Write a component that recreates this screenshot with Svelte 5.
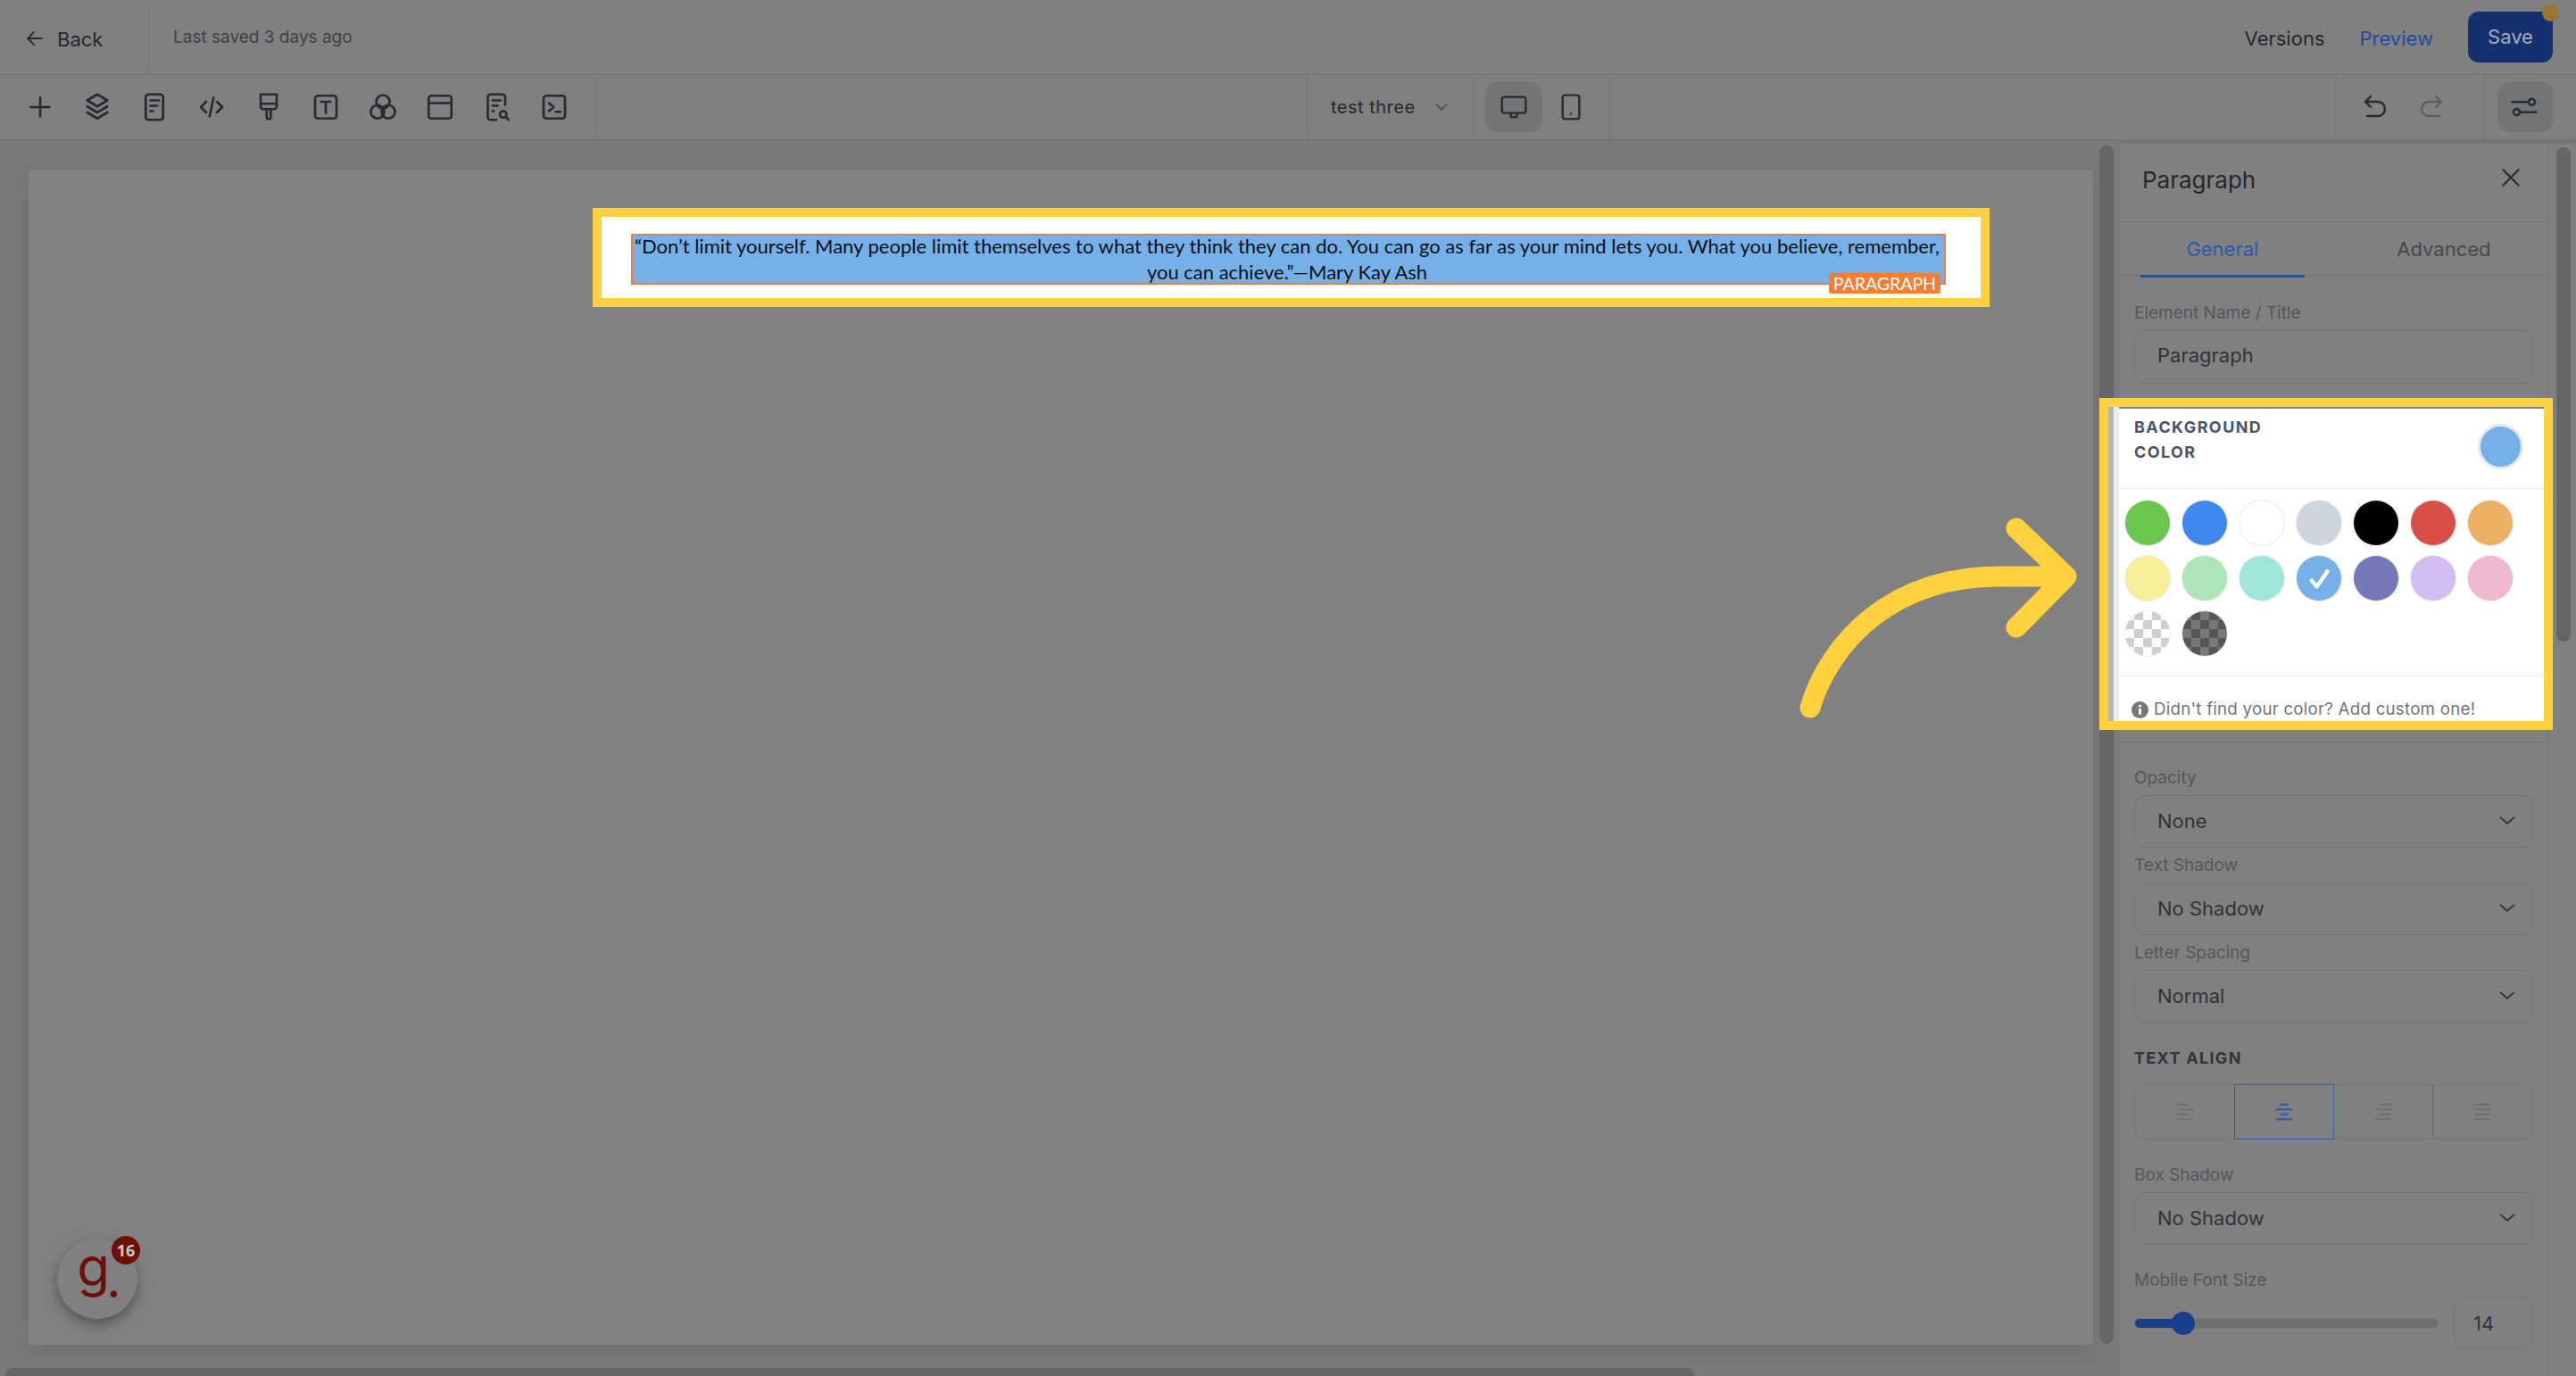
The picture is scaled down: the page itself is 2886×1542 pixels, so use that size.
<script>
  const tools = [
    "M12 5v14M5 12h14",
    "M12 2.500l7.500 4.500-7.500 4.500L4.500 7zM4.500 11.500L12 16l7.500-4.500M4.500 16L12 20.500 19.500 16",
    "M7.500 2.500h9a2 2 0 0 1 2 2v15a2 2 0 0 1-2 2h-9a2 2 0 0 1-2-2v-15a2 2 0 0 1 2-2zM9 7h6.500M9 11h5M9 15h2",
    "M8 8l-4 4 4 4M16 8l4 4-4 4M13.500 5l-3 14",
    "M6 2.500h12v9a2 2 0 0 1-2 2H8a2 2 0 0 1-2-2zM6 9.500h12M10.500 13.500v6a1.500 1.500 0 0 0 3 0v-6",
    "M6 3.500h12a2 2 0 0 1 2 2v13a2 2 0 0 1-2 2H6a2 2 0 0 1-2-2v-13a2 2 0 0 1 2-2zM8.500 8h7M12 8v8.500",
    "M17 8a5 5 0 1 1-10 0a5 5 0 1 1 10 0zM13 15.500a5 5 0 1 1-10 0a5 5 0 1 1 10 0zM21 15.500a5 5 0 1 1-10 0a5 5 0 1 1 10 0z",
    "M5.500 3.500h13a2 2 0 0 1 2 2v13a2 2 0 0 1-2 2h-13a2 2 0 0 1-2-2v-13a2 2 0 0 1 2-2zM3.500 9h17",
    "M18 10.500V4.500a2 2 0 0 0-2-2H7a2 2 0 0 0-2 2v15a2 2 0 0 0 2 2h4.500M8.500 7h6M8.500 11h4M8.500 15h1M19 17.500a2.500 2.500 0 1 1-5 0a2.500 2.500 0 1 1 5 0zM18.500 19.500l2 2",
    "M6 3.500h12a2 2 0 0 1 2 2v13a2 2 0 0 1-2 2H6a2 2 0 0 1-2-2v-13a2 2 0 0 1 2-2zM8 9l3.500 3-3.500 3M13 15.500h3.500"
  ];

  const colors = [
    "#6ac64e", "#3f88ee", "#ffffff", "#cdd5df", "#000000", "#d94f47", "#ebb064",
    "#f8ef9a", "#aee6ba", "#9ee6da", "#75b1e8", "#7679b8", "#d2bdf2", "#f0b8ce"
  ];

  const alignments = [
    ["M2 3h15", "M2 9h20", "M2 15h15", "M2 21h20"],
    ["M7 3h10", "M2 9h20", "M7 15h10", "M2 21h20"],
    ["M8 3h14", "M2 9h20", "M8 15h14", "M2 21h20"],
    ["M2 3h20", "M2 9h20", "M2 15h20", "M2 21h20"]
  ];

  const fontSize = 14;
  const sliderPct = ((fontSize - 8) / 38) * 100;
</script>

{#snippet chevron()}
  <svg class="chev" viewBox="0 0 24 24"><path d="M4 8l8 7 8-7" /></svg>
{/snippet}

{#snippet selectField(label, value)}
  <div class="field">
    <span class="label">{label}</span>
    <div class="control select"><span>{value}</span>{@render chevron()}</div>
  </div>
{/snippet}

<div class="page">
  <header class="topbar">
    <div class="back">
      <svg viewBox="0 0 24 24"><path d="M20 12H5M11 5l-7 7 7 7" /></svg>
      <span>Back</span>
    </div>
    <span class="saved">Last saved 3 days ago</span>
    <div class="actions">
      <span class="versions">Versions</span>
      <span class="preview">Preview</span>
      <button class="save">Save<i class="dot"></i></button>
    </div>
  </header>

  <nav class="toolbar">
    <div class="tools">
      {#each tools as d}
        <svg class="tool" viewBox="0 0 24 24"><path {d} /></svg>
      {/each}
    </div>
    <div class="page-select">
      <span>test three</span>
      <svg class="small-chev" viewBox="0 0 24 24"><path d="M5 8.500l7 7 7-7" /></svg>
    </div>
    <div class="devices">
      <div class="device active">
        <svg viewBox="0 0 24 24"><path d="M4 3.500h16a2 2 0 0 1 2 2v9.500a2 2 0 0 1-2 2H4a2 2 0 0 1-2-2v-9.500a2 2 0 0 1 2-2zM9.500 17v3.500h5V17" /></svg>
      </div>
      <div class="device">
        <svg viewBox="0 0 24 24"><path d="M7 2h10a2 2 0 0 1 2 2v16a2 2 0 0 1-2 2H7a2 2 0 0 1-2-2V4a2 2 0 0 1 2-2zM12 17.500v.1" /></svg>
      </div>
    </div>
    <div class="history">
      <svg viewBox="0 0 24 24"><path d="M9 3L4.500 7.500 9 12M5 7.500h10a5.500 5.500 0 0 1 0 12H6" /></svg>
      <svg class="off" viewBox="0 0 24 24"><path d="M15 3l4.500 4.500L15 12M19 7.500H9a5.500 5.500 0 0 0 0 12h9" /></svg>
    </div>
    <div class="settings">
      <div class="settings-btn">
        <svg viewBox="0 0 24 24"><path d="M2.500 8H15M20.500 8a2.500 2.500 0 1 1-5 0a2.500 2.500 0 1 1 5 0zM21.500 16H9M8.500 16a2.500 2.500 0 1 1-5 0a2.500 2.500 0 1 1 5 0z" /></svg>
      </div>
    </div>
  </nav>

  <div class="workspace">
    <main class="canvas">
      <div class="paper">
        <div class="spot">
          <div class="selected">
            <p>“Don’t limit yourself. Many people limit themselves to what they think they can do. You can go as far as your mind lets you. What you believe, remember, you can achieve.”—Mary Kay Ash</p>
            <span class="tag">PARAGRAPH</span>
          </div>
        </div>
      </div>
      <div class="scroll-x"></div>
      <div class="scroll-y"></div>
    </main>

    <aside class="panel">
      <div class="panel-head">
        <h2>Paragraph</h2>
        <svg viewBox="0 0 24 24"><path d="M4 4l16 16M20 4L4 20" /></svg>
      </div>
      <div class="tabs">
        <span class="tab on">General</span>
        <span class="tab">Advanced</span>
      </div>

      <div class="body">
        <div class="field">
          <span class="label">Element Name / Title</span>
          <div class="control name">Paragraph</div>
        </div>
      </div>

      <section class="color">
        <div class="color-head">
          <h3>BACKGROUND COLOR</h3>
          <span class="current"></span>
        </div>
        <div class="swatches">
          {#each colors as c, i}
            <span class="swatch" style="background:{c}">
              {#if i === 10}
                <svg viewBox="0 0 24 24"><path d="M4 13l6 7L21 4" /></svg>
              {/if}
            </span>
          {/each}
          <span class="swatch check-light"></span>
          <span class="swatch check-dark"></span>
        </div>
        <div class="color-foot">
          <svg viewBox="0 0 20 20">
            <circle cx="10" cy="10" r="10" fill="#777" />
            <rect x="8.500" y="8.500" width="3" height="7" fill="#fff" />
            <circle cx="10" cy="5.500" r="1.700" fill="#fff" />
          </svg>
          <span>Didn't find your color? Add custom one!</span>
        </div>
      </section>

      <div class="body rest">
        {@render selectField("Opacity", "None")}
        {@render selectField("Text Shadow", "No Shadow")}
        {@render selectField("Letter Spacing", "Normal")}

        <h4>TEXT ALIGN</h4>
        <div class="align">
          {#each alignments as lines, i}
            <div class="align-btn" class:on={i === 1}>
              <svg viewBox="0 0 24 24">
                {#each lines as d}<path {d} />{/each}
              </svg>
            </div>
          {/each}
        </div>

        <div class="box-shadow">{@render selectField("Box Shadow", "No Shadow")}</div>

        <div class="field mobile">
          <span class="label">Mobile Font Size</span>
          <div class="slider-row">
            <div class="track">
              <div class="fill" style="width:{sliderPct}%"><i class="thumb"></i></div>
            </div>
            <div class="control number">{fontSize}</div>
          </div>
        </div>
      </div>
    </aside>

    <div class="scroll-panel"></div>
  </div>

  <!-- annotation layer -->
  <div class="frame"><i class="bar"></i><i class="bar light"></i></div>

  <svg class="arrow" viewBox="0 0 400 260">
    <path d="M28 213C50 140 120 63 247 66L315 66M259 12L315 66L259 123" />
  </svg>

  <div class="widget">
    <span class="g">g<span class="period">.</span></span>
    <span class="badge">16</span>
  </div>
</div>

<style>
  :global(body) {
    margin: 0;
    background: #808080;
  }

  .page {
    position: relative;
    width: 2886px;
    height: 1542px;
    overflow: hidden;
    display: flex;
    flex-direction: column;
    background: #808080;
    color: #24272e;
    font-family: Inter, "Liberation Sans", sans-serif;
  }

  svg {
    fill: none;
    stroke: #262b33;
    stroke-width: 1.8;
    stroke-linecap: round;
    stroke-linejoin: round;
    flex: none;
  }

  /* top bar */
  .topbar {
    height: 83px;
    flex: none;
    display: flex;
    align-items: center;
    border-bottom: 1px solid #747678;
    box-sizing: content-box;
  }

  .back {
    width: 167px;
    height: 76px;
    margin-top: 5px;
    box-sizing: border-box;
    display: flex;
    align-items: center;
    gap: 13px;
    padding-left: 27px;
    border-right: 1px solid #747678;
    font-size: 22px;
  }

  .back svg {
    width: 24px;
    height: 24px;
    margin-bottom: 2px;
  }

  .saved {
    margin-left: 27px;
    font-size: 19px;
    color: #3e4148;
  }

  .actions {
    margin-left: auto;
    display: flex;
    align-items: center;
    padding-right: 26px;
  }

  .versions {
    font-size: 22px;
    margin-right: 39px;
    margin-top: 3px;
  }

  .preview {
    font-size: 22px;
    color: #234a9c;
    margin-right: 39px;
    margin-top: 3px;
  }

  .save {
    position: relative;
    width: 95px;
    height: 57px;
    border: 0;
    border-radius: 12px;
    background: #14306f;
    color: #a6adbd;
    font: 22px Inter, sans-serif;
    margin-top: -1px;
  }

  .dot {
    position: absolute;
    top: -8px;
    right: -7px;
    width: 19px;
    height: 19px;
    border-radius: 50%;
    background: #997531;
  }

  /* toolbar */
  .toolbar {
    height: 72px;
    flex: none;
    display: flex;
    align-items: stretch;
    border-bottom: 2px solid #727476;
    box-shadow: 0 2px 4px rgba(0, 0, 0, 0.12);
    position: relative;
  }

  .toolbar > div {
    display: flex;
    align-items: center;
    box-sizing: border-box;
    border-right: 1px solid #747678;
  }

  .tools {
    width: 667px;
    padding-left: 27px;
    gap: 28px;
  }

  .tool {
    width: 36px;
    height: 36px;
  }

  .page-select {
    margin-left: 797px;
    border-left: 1px solid #747678;
    width: 187px;
    padding-left: 26px;
    font-size: 20px;
    letter-spacing: 0.5px;
  }

  .small-chev {
    width: 20px;
    height: 20px;
    margin-left: 19px;
    stroke: #44474d;
  }

  .devices {
    width: 154px;
    padding-left: 13px;
    gap: 0;
  }

  .device {
    width: 64px;
    height: 56px;
    border-radius: 14px;
    display: flex;
    align-items: center;
    justify-content: center;
  }

  .device.active {
    background: #737577;
  }

  .device svg {
    width: 32px;
    height: 32px;
  }

  .history {
    margin-left: 812px;
    border-left: 1px solid #747678;
    width: 167px;
    padding-left: 26px;
    gap: 33px;
  }

  .history svg {
    width: 32px;
    height: 32px;
  }

  .history .off {
    stroke: #5c5f64;
  }

  .settings {
    border-right: 0 !important;
    padding-left: 14px;
  }

  .settings-btn {
    width: 63px;
    height: 56px;
    border-radius: 14px;
    background: #737577;
    display: flex;
    align-items: center;
    justify-content: center;
  }

  .settings-btn svg {
    width: 34px;
    height: 34px;
    margin-left: -3px;
  }

  /* canvas */
  .workspace {
    flex: 1;
    min-height: 0;
    display: flex;
  }

  .canvas {
    position: relative;
    width: 2374px;
    flex: none;
    background: #797a7b;
    padding: 32px 0 0 32px;
    box-sizing: border-box;
    border-right: 1px solid #747678;
  }

  .paper {
    width: 2313px;
    height: 1317px;
    background: #818181;
    padding: 53px 0 0 642px;
    box-sizing: border-box;
    box-shadow: 0 6px 24px rgba(0, 0, 0, 0.1);
  }

  .spot {
    width: 1545px;
    height: 91px;
    box-sizing: border-box;
    background: #fff;
    outline: 10px solid #ffd13f;
    padding: 19px 0 0 33px;
  }

  .selected {
    position: relative;
    width: 1473px;
    height: 57px;
    box-sizing: border-box;
    background: #75b1e8;
    border: 2px solid #f27f37;
    color: #0b0f14;
    font: 22px/29px Lato, sans-serif;
    text-align: center;
  }

  .selected p {
    margin: -3px 0 0;
    padding: 0 3px 0 0;
  }

  .tag {
    position: absolute;
    right: 4px;
    bottom: -12px;
    height: 23px;
    padding: 0 5px;
    border-radius: 3px;
    background: #f27f37;
    color: #fff;
    font: 19.500px/23px Lato, sans-serif;
  }

  .scroll-x {
    position: absolute;
    left: 6px;
    bottom: -6px;
    width: 1892px;
    height: 15px;
    border-radius: 8px;
    background: #666;
  }

  .scroll-y {
    position: absolute;
    left: 2352px;
    top: 5px;
    width: 16px;
    height: 1343px;
    border-radius: 8px;
    background: #666;
  }

  /* side panel */
  .panel {
    width: 481px;
    flex: none;
    box-sizing: border-box;
    border-right: 1px solid #747678;
    overflow: hidden;
  }

  .panel-head {
    height: 90px;
    display: flex;
    align-items: center;
    justify-content: space-between;
    padding: 0 28px 0 26px;
    border-bottom: 1px solid #747678;
  }

  .panel-head h2 {
    margin: -3px 0 0;
    font-size: 26px;
    font-weight: 400;
  }

  .panel-head svg {
    width: 26px;
    height: 26px;
    margin-bottom: 8px;
    stroke-width: 2;
  }

  .tabs {
    height: 59px;
    display: flex;
    padding-left: 24px;
    border-bottom: 1px solid #747678;
  }

  .tab {
    width: 186px;
    text-align: center;
    line-height: 60px;
    font-size: 22px;
    color: #45484e;
  }

  .tab:last-child {
    width: 235px;
    margin-left: 40px;
  }

  .tab.on {
    color: #2d5aa6;
    border-bottom: 3px solid #234f9d;
    height: 59px;
    box-sizing: content-box;
  }

  .body {
    padding: 31px 16px 0 17px;
  }

  .field {
    display: flex;
    flex-direction: column;
    gap: 8px;
  }

  .label {
    font-size: 19px;
    line-height: 22px;
    color: #54575c;
  }

  .control {
    box-sizing: border-box;
    border: 1px solid #737578;
    border-radius: 11px;
    padding: 0 25px 2px;
    display: flex;
    align-items: center;
    font-size: 22px;
    color: #30333a;
  }

  .name {
    height: 60px;
    padding-bottom: 4px;
  }

  .select {
    height: 59px;
    justify-content: space-between;
    padding-right: 17px;
  }

  .chev {
    width: 22px;
    height: 22px;
    stroke: #2e3138;
    stroke-width: 2;
  }

  /* spotlighted colour block: white stops at the frame, the last 22px stay dim */
  .color {
    margin-top: 28px;
    height: 374px;
    border-bottom: 1px solid #747678;
    box-sizing: border-box;
  }

  .color-head {
    height: 90px;
    box-sizing: border-box;
    display: flex;
    justify-content: space-between;
    padding: 7px 27px 0 17px;
    background: #fff;
    border-bottom: 1px solid #e3e6ec;
  }

  .color h3 {
    margin: 0;
    width: 190px;
    font-size: 18px;
    line-height: 28px;
    font-weight: 700;
    letter-spacing: 1.400px;
    color: #475569;
  }

  .current {
    width: 45px;
    height: 45px;
    margin-top: 10px;
    border-radius: 50%;
    background: #75b1e8;
    border: 3px solid #e2e8f0;
  }

  .swatches {
    height: 210px;
    box-sizing: border-box;
    background: #fff;
    border-bottom: 1px solid #e3e6ec;
    display: grid;
    grid-template-columns: repeat(7, 50px);
    grid-auto-rows: 50px;
    column-gap: 14px;
    row-gap: 12px;
    padding: 13px 0 0 7px;
  }

  .swatch {
    border-radius: 50%;
    box-shadow: 0 0 0 1px #e8ebf0;
    display: flex;
    align-items: center;
    justify-content: center;
  }

  .swatch svg {
    width: 28px;
    height: 28px;
    stroke: #fff;
    stroke-width: 3.800;
    stroke-linecap: butt;
  }

  .check-light {
    background: repeating-conic-gradient(#cfcfcf 0 25%, #fff 0 50%) 0 0 / 20px 20px;
  }

  .check-dark {
    background: repeating-conic-gradient(#565656 0 25%, #777 0 50%) 0 0 / 20px 20px;
  }

  .color-foot {
    height: 52px;
    box-sizing: border-box;
    background: #fff;
    display: flex;
    align-items: flex-start;
    gap: 6px;
    padding: 26px 0 0 14px;
    font-size: 18.800px;
    line-height: 22px;
    letter-spacing: 0.2px;
    color: #71757c;
  }

  .color-foot svg {
    width: 19px;
    height: 19px;
    margin-top: 2px;
    stroke: none;
  }

  .rest {
    padding-top: 29px;
    display: flex;
    flex-direction: column;
    gap: 9px;
  }

  .rest h4 {
    margin: 20px 0 0;
    font-size: 18px;
    line-height: 22px;
    letter-spacing: 1.300px;
    font-weight: 700;
    color: #30343b;
  }

  .align {
    height: 62px;
    margin-top: 9px;
    display: grid;
    grid-template-columns: repeat(4, 1fr);
    border: 1px solid #737578;
    border-radius: 11px;
    box-sizing: border-box;
  }

  .align-btn {
    display: flex;
    align-items: center;
    justify-content: center;
  }

  .align-btn:nth-child(3) {
    border-right: 1px solid #66686b;
  }

  .align-btn svg {
    width: 22px;
    height: 22px;
    stroke: #6a6c70;
    stroke-width: 1.900;
    stroke-linecap: butt;
  }

  .align-btn.on {
    border: 1px solid #335f9f;
    margin: -1px 0;
  }

  .align-btn.on svg {
    stroke: #2c5ca8;
    stroke-width: 2.300;
  }

  .box-shadow {
    margin-top: 20px;
  }

  .mobile {
    margin-top: 20px;
  }

  .slider-row {
    display: flex;
    align-items: center;
    gap: 17px;
  }

  .track {
    width: 342px;
    height: 12px;
    border-radius: 6px;
    background: #6f7072;
    border: 1px solid #77797b;
    box-sizing: border-box;
  }

  .fill {
    position: relative;
    height: 10px;
    border-radius: 6px;
    background: #183e8c;
  }

  .thumb {
    position: absolute;
    right: -13px;
    top: -8px;
    width: 26px;
    height: 26px;
    border-radius: 50%;
    background: #183e8c;
  }

  .number {
    width: 89px;
    height: 58px;
    padding: 0 21px;
  }

  .scroll-panel {
    width: 16px;
    height: 554px;
    margin: 7px 0 0 9px;
    border-radius: 8px;
    background: #666;
    flex: none;
  }

  /* annotations */
  .frame {
    position: absolute;
    left: 2352px;
    top: 446px;
    width: 508px;
    height: 372px;
    box-sizing: border-box;
    border: 10px solid #ffd13f;
    display: flex;
  }

  .bar {
    width: 6px;
    background: #b5b5b5;
  }

  .bar.light {
    width: 6px;
    background: #ececec;
  }

  .arrow {
    position: absolute;
    left: 2000px;
    top: 580px;
    width: 400px;
    height: 260px;
    stroke: #ffd13f;
    stroke-width: 23;
  }

  .widget {
    position: absolute;
    left: 64px;
    top: 1388px;
    width: 90px;
    height: 90px;
    border-radius: 50%;
    background: #808080;
    box-shadow: 0 6px 14px rgba(0, 0, 0, 0.35);
    display: flex;
    align-items: center;
    justify-content: center;
  }

  .g {
    font: 400 60px/60px Inter, sans-serif;
    color: #6f0f0a;
    margin-top: -22px;
    letter-spacing: -3px;
  }

  .period {
    position: relative;
    top: 13px;
    font-weight: 700;
    font-size: 44px;
  }

  .badge {
    position: absolute;
    top: -3px;
    right: -3px;
    width: 32px;
    height: 32px;
    border-radius: 50%;
    background: #6f0f0a;
    color: #c9c9c9;
    font: 700 18px/32px "Open Sans", sans-serif;
    text-align: center;
  }
</style>
